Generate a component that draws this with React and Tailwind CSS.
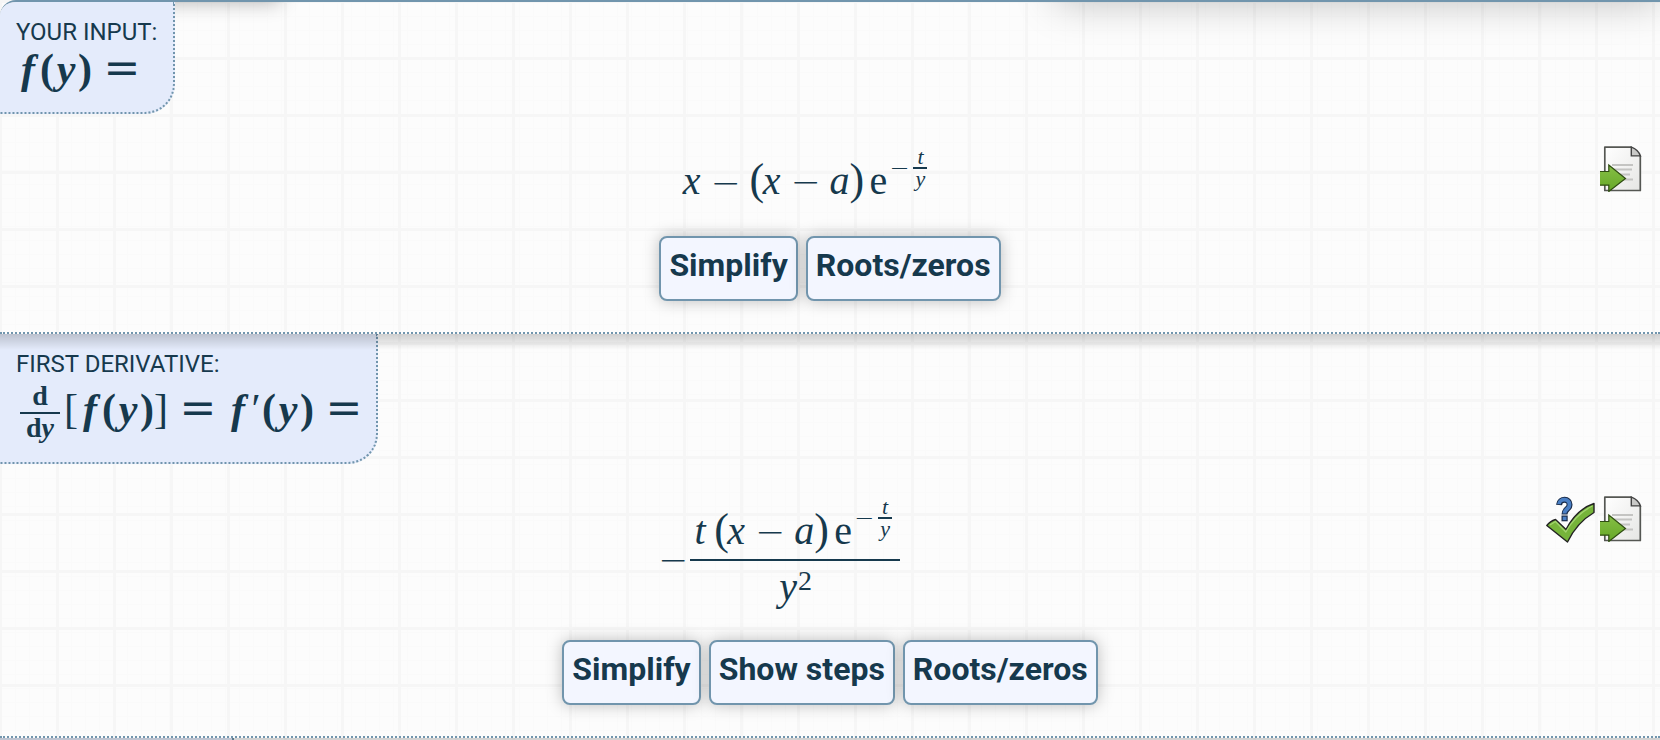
const V = ({ children }) => (
  <i className="inline-block w-5 text-center">{children}</i>
);
const P = ({ children }) => (
  <span className="inline-block w-3 text-center text-[44px] leading-10">{children}</span>
);
const Minus = () => (
  <span className="inline-block w-12 text-center font-['DejaVu_Sans',sans-serif] text-[36px] leading-none font-extralight">
    −
  </span>
);

const BV = ({ children }) => (
  <i className="inline-block w-6 text-center">{children}</i>
);
const BP = ({ children }) => (
  <span className="inline-block w-3.5 text-center">{children}</span>
);
const Equals = () => (
  <span className="mr-3 ml-3.5 inline-flex w-8 justify-center font-['DejaVu_Serif',serif] text-[44px] leading-none font-normal last:mr-0">
    =
  </span>
);

function Exponent() {
  return (
    <span className="mb-3 ml-0.5 flex items-center gap-1 text-[22px]">
      <span className="font-['DejaVu_Sans',sans-serif] text-[24px] leading-none font-extralight">−</span>
      <span className="flex flex-col items-center">
        <i className="h-5 leading-5">t</i>
        <span className="h-0.5 w-3.5 bg-[#16394d]" />
        <i className="h-5 leading-5">y</i>
      </span>
    </span>
  );
}

function Product() {
  return (
    <span className="flex items-end whitespace-nowrap">
      <span>
        <P>(</P>
        <V>x</V>
        <Minus />
        <V>a</V>
        <P>)</P>
        <span className="ml-2">e</span>
      </span>
      <Exponent />
    </span>
  );
}

function ActionButton({ children }) {
  return (
    <button
      type="button"
      className="h-[65px] rounded-lg border-2 border-[#7195ad] bg-[#f3f6ff] px-2 pb-2 text-[32px] leading-none font-bold shadow-[0_0_16px_rgba(0,0,0,0.25)]"
    >
      {children}
    </button>
  );
}

function ExportIcon() {
  return (
    <svg viewBox="0 0 48 48" className="size-12" aria-hidden="true">
      <defs>
        <linearGradient id="page" x1="0" y1="0" x2="1" y2="1">
          <stop offset="0" stopColor="#fff" />
          <stop offset="1" stopColor="#e6e6e4" />
        </linearGradient>
        <linearGradient id="green" x1="0" y1="0" x2="0" y2="1">
          <stop offset="0" stopColor="#86bf45" />
          <stop offset="1" stopColor="#66a828" />
        </linearGradient>
      </defs>
      <path d="M8.800 3.200h26.500l9 9v34.300H8.800z" fill="url(#page)" stroke="#555753" strokeWidth="1.700" strokeLinejoin="round" />
      <path d="M35.300 3.200v8.700h9.200Q42 5.500 35.300 3.200z" fill="#c9c9c7" stroke="#444" strokeWidth="1.400" />
      <path d="M16 21h21M16 25.500h20M16 30.500h18M16 35.500h21" stroke="#c4c4c2" strokeWidth="2" />
      <path d="M4 27.500h8.800v-6.500L29.500 34.500 12.800 47.500v-6.300H4z" fill="url(#green)" />
      <path d="M4 27.500h8.800v-6.500L29.500 34.500 12.800 47.500v-6.300H4" fill="none" stroke="#2f4d12" strokeWidth="1.200" />
    </svg>
  );
}

function CheckIcon() {
  return (
    <svg viewBox="0 0 48 48" className="size-12 overflow-visible" aria-hidden="true">
      <path d="M1.800 31.500C4 28.500 7 26.500 10.500 25.500L21 35.500C27 24 37 13.500 49 9.500v9C38 25 29 34.500 22.500 48z" fill="#76b43a" stroke="#222" strokeWidth="1.400" strokeLinejoin="round" />
      <path d="M5 31l5.500-3.500 10.300 10.500C27 27 37 17 47.500 12" fill="none" stroke="#a3d470" strokeWidth="1.300" />
      <path d="M14 11c.5-7 11-7 10.500 0 0 4-5 4-5 9.500" fill="none" stroke="#1b2d4a" strokeWidth="6" />
      <path d="M16.500 21.500h6.200v5.800h-6.200z" fill="#1b2d4a" />
      <path d="M14 10.200c.5-6.200 11-6.200 10.500.8 0 4-5 4-5 8.500" fill="none" stroke="#4a7fc4" strokeWidth="3.800" />
      <path d="M17.700 22.700h3.800v3.400h-3.800z" fill="#4a7fc4" />
    </svg>
  );
}

function IconLink({ label, children }) {
  return (
    <a href="#" aria-label={label} className="block">
      {children}
    </a>
  );
}

function Label({ title, children }) {
  return (
    <header className="w-fit rounded-br-[30px] border-r-2 border-b-2 border-dotted border-[#7195ad] bg-[#e4ebfb] px-4 pt-4">
      <h2 className="text-[24px] leading-7">{title}</h2>
      {children}
    </header>
  );
}

function Result({ formula, icons, actions }) {
  return (
    <>
      <div className="flex items-start gap-[3px] px-4 pt-[30px]">
        <div className="flex flex-1 justify-center pt-[3px] font-['Liberation_Serif',serif] text-[40px] leading-none">
          {formula}
        </div>
        {icons}
      </div>
      <div className="mt-auto flex justify-center gap-2 pb-[31px]">
        {actions.map((name) => (
          <ActionButton key={name}>{name}</ActionButton>
        ))}
      </div>
    </>
  );
}

const TopShade = () => (
  <div className="pointer-events-none absolute inset-x-0 top-0 h-4 bg-linear-to-b from-black/18 to-transparent" />
);

export default function App() {
  return (
    <main className="h-screen overflow-hidden bg-[#fcfcfc] bg-[linear-gradient(90deg,transparent_54px,#f6f6f6_54px,#f6f6f6_57px),linear-gradient(transparent_54px,#f6f6f6_54px,#f6f6f6_57px),linear-gradient(90deg,transparent_13px,#fafafa_13px),linear-gradient(transparent_13px,#fafafa_13px)] bg-[size:57px_57px,57px_57px,14px_14px,14px_14px] bg-[position:2px_3px] font-[Roboto,sans-serif] text-[#16394d]">
      <section className="relative flex min-h-[332px] flex-col overflow-hidden rounded-tl-2xl border-t-2 border-[#7195ad]">
        <div className="absolute -top-10 right-0 left-[1056px] h-10 shadow-[0_0_40px_rgba(0,0,0,0.25)]" />
        <div className="absolute -top-10 left-0 h-10 w-[280px] shadow-[0_0_20px_rgba(0,0,0,0.3)]" />
        <div className="relative">
          <Label title="YOUR INPUT:">
            <div className="h-[66px] font-['Liberation_Serif',serif] text-[42px] leading-[44px] font-bold whitespace-nowrap">
              <BV>f</BV><BP>(</BP><BV>y</BV><BP>)</BP><Equals />
            </div>
          </Label>
        </div>
        <Result
          formula={<span className="flex items-end"><V>x</V><Minus /><Product /></span>}
          icons={<IconLink label="Export"><ExportIcon /></IconLink>}
          actions={["Simplify", "Roots/zeros"]}
        />
      </section>

      <section className="relative flex min-h-[404px] flex-col border-t-2 border-dotted border-[#7195ad]">
        <Label title="FIRST DERIVATIVE:">
          <div className="flex h-[84px] items-start pt-1 font-['Liberation_Serif',serif] text-[42px] leading-[44px] font-bold whitespace-nowrap">
            <span className="mx-1 flex w-10 flex-col items-center text-[28px] leading-7">
              <span className="pb-0.5">d</span>
              <span className="h-0.5 w-full bg-[#16394d]" />
              <span>d<i>y</i></span>
            </span>
            <span className="pt-1">
              <span className="inline-block w-3.5 text-center font-normal">[</span>
              <BV>f</BV><BP>(</BP><BV>y</BV><BP>)</BP>
              <span className="inline-block w-3.5 text-center font-normal">]</span>
              <Equals />
              <BV>f</BV><span className="inline-block w-3 text-center font-normal">′</span>
              <BP>(</BP><BV>y</BV><BP>)</BP><Equals />
            </span>
          </div>
        </Label>
        <Result
          formula={
            <span className="flex items-center">
              <span className="pt-4 font-['DejaVu_Sans',sans-serif] text-[36px] font-extralight">−</span>
              <span className="ml-0.5 flex flex-col items-center">
                <span className="flex items-end pr-2 pb-2"><V>t</V><span className="w-1" /><Product /></span>
                <span className="h-0.5 w-full bg-[#16394d]" />
                <span className="flex items-start pt-1.5">
                  <V>y</V>
                  <span className="text-[28px] leading-none">2</span>
                </span>
              </span>
            </span>
          }
          icons={
            <>
              <IconLink label="Check your answer"><CheckIcon /></IconLink>
              <IconLink label="Export"><ExportIcon /></IconLink>
            </>
          }
          actions={["Simplify", "Show steps", "Roots/zeros"]}
        />
        <TopShade />
      </section>

      <section className="relative h-10 border-t-2 border-dotted border-[#7195ad]">
        <div className="h-10 w-[234px] border-r-2 border-dotted border-[#7195ad] bg-[#e4ebfb]" />
        <TopShade />
      </section>
    </main>
  );
}
